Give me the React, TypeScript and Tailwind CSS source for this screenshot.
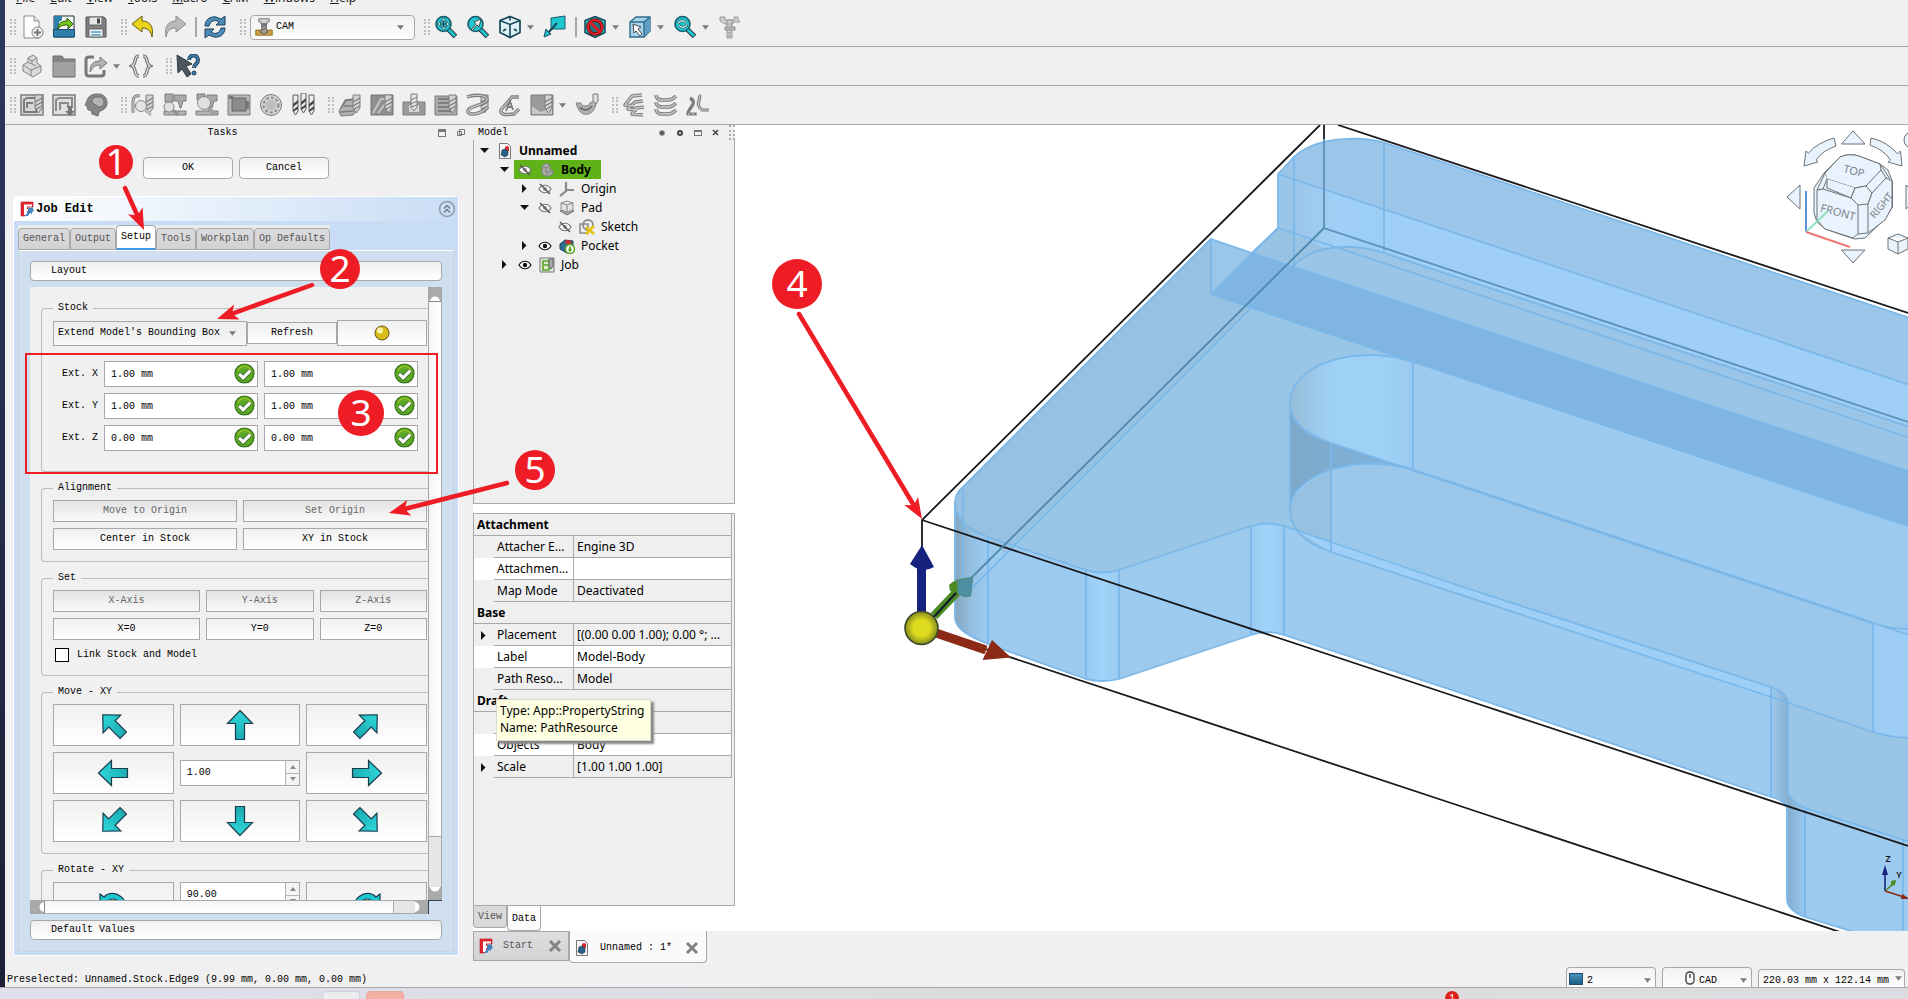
import { Fragment, type ReactNode } from "react";

const mono = "font-['Liberation_Mono',monospace] text-[10px] leading-3";
const sans = "font-['Noto_Sans',sans-serif] text-xs leading-4";

const DARK = "#22313a";
const TEAL = "#1fc8d0";
const GREY = "#7c7c7c";
const LIGHT = "#b9b9b9";

/* ---------- toolbar icons ---------- */

const magnifier = (
    <>
        <path d="M13.500 13.500 21.500 21.500" stroke={DARK} strokeWidth="5" />
        <path d="M13.500 13.500 21 21" stroke={TEAL} strokeWidth="3" />
        <circle cx="9.500" cy="9" r="7.500" fill={TEAL} stroke="#1d5a6c" strokeWidth="1.600" />
    </>
);

const drill = (
    <>
        <path d="M15 2h7v13l-3.500 5-3.500-5z" fill="#d4d4d4" stroke={GREY} />
        <path d="m15 9 7-4M15 13l7-4M15.500 16.500 22 13" stroke={GREY} strokeWidth="1.300" />
    </>
);

const icons: Record<string, ReactNode> = {
    new: (
        <>
            <path d="M4 1h10l5 5v17H4z" fill="#fff" stroke="#8b8b8b" />
            <path d="M14 1v5h5" fill="#e4e4e4" stroke="#8b8b8b" />
            <circle cx="17.500" cy="17.500" r="5.500" fill="#f2f2f2" stroke="#777" />
            <path d="M17.500 14v7M14 17.500h7" stroke="#777" strokeWidth="2" />
        </>
    ),
    open: (
        <>
            <path d="M2 1h20v21H2z" fill="#f7f7f7" stroke={DARK} />
            <path d="M2 1h8v4l-3 2v7H2z" fill="#2f80ab" />
            <path d="M1.500 14.500h21V22h-21z" fill="#2f80ab" stroke="#194f6c" />
            <path d="M6 14c0-6 4-8 9-8V3l6 6-5 5v-4c-4 0-7 0-10 4z" fill="#73c51b" stroke="#2b5a0d" />
        </>
    ),
    save: (
        <>
            <path d="M2 2h18l2 2v18H2z" fill="#7d7f80" stroke="#555" />
            <path d="M5 2h13v8H5z" fill="#e8e8e8" stroke="#666" />
            <path d="M13 3.500h3v5h-3z" fill="#444" />
            <path d="M5 14h14v8H5z" fill="#f4f4f4" stroke="#666" />
            <path d="M7 17h10M7 20h10" stroke="#4f9fc6" strokeWidth="1.500" />
        </>
    ),
    undo: <path d="M1 9 11 1v5c8 0 12 6 10 16-1-6-4-9-10-9v4z" fill="#ecd41b" stroke="#655b10" />,
    redo: <path d="M23 9 13 1v5C5 6 1 12 3 22c1-6 4-9 10-9v4z" fill={LIGHT} stroke="#8c8c8c" />,
    refresh: (
        <>
            <path d="M2 11C2 5 7 1 13 2l5 2 4-3v9h-9l3-3c-4-3-9-1-10 4z" fill="#4d8cb8" stroke="#1c3f5a" />
            <path d="M22 13c0 6-5 10-11 9l-5-2-4 3v-9h9l-3 3c4 3 9 1 10-4z" fill="#4d8cb8" stroke="#1c3f5a" />
        </>
    ),
    cam: (
        <>
            <path d="M1 16h22v7H1z" fill="#c9a04b" stroke="#805c11" />
            <path d="M5 1h14v4h-3v3H8V5H5z" fill="#d0d0d0" stroke="#555" />
            <path d="M9 8h6v7l2 4-5 2-5-2 2-4z" fill="#a0a0a0" stroke="#444" />
            <path d="m9 12 6-3M9 16l6-3" stroke="#444" />
        </>
    ),
    fit: (
        <>
            {magnifier}
            <path d="M9.500 3v12M3.500 9h12" stroke={DARK} strokeWidth="1" />
            <path d="m9.500 3 2.500 3h-5zM9.500 15 7 12h5zM3.500 9l3-2.500v5zM15.500 9l-3-2.500v5z" fill="#b9ecf0" stroke={DARK} strokeWidth=".6" />
        </>
    ),
    fitSelection: (
        <>
            {magnifier}
            <path d="m5 15 5-6-2-2 7-3-2 8-2-2-5 6z" fill="#f4f4f4" stroke={DARK} strokeWidth=".8" />
        </>
    ),
    cube: (
        <>
            <path d="m12 1.500 10 4v12l-10 5-10-5v-12z" fill="#dff1f5" stroke="#17485a" strokeWidth="1.700" />
            <path d="m2 5.500 10 4 10-4M12 9.500v13M12 1.500v4M5 16l3-2M19 16l-3-2" stroke="#17485a" strokeWidth="1.600" />
        </>
    ),
    align: (
        <>
            <path d="m8 3 14-2v13H8z" fill={TEAL} stroke="#1d5a6c" />
            <path d="M14 8 5 18" stroke="#17485a" strokeWidth="2" />
            <path d="m1 22 2-8 2 3 3 2z" fill={TEAL} stroke="#17485a" />
        </>
    ),
    noSign: (
        <>
            <path d="m12 1.500 10 4v12l-10 5-10-5v-12z" fill={TEAL} stroke="#17485a" strokeWidth="1.500" />
            <circle cx="12" cy="12" r="7" fill="#2b6f7a" stroke="#5c0c10" strokeWidth="3.600" />
            <circle cx="12" cy="12" r="7" stroke="#e01b24" strokeWidth="2.200" />
            <path d="m7 7 10 10" stroke="#e01b24" strokeWidth="2.600" />
        </>
    ),
    boxSelect: (
        <>
            <path d="M2 7 8 2h14v14l-6 6H2z" fill="#a9d3ea" stroke="#2f6c8c" strokeWidth="1.400" />
            <path d="M16 7l6-5v14l-6 6z" fill="#5f9fc4" />
            <path d="M2 7h14v15M16 7l6-5" stroke="#2f6c8c" strokeWidth="1.400" />
            <path d="m5 9 8 3-3 2 4 5-2 2-4-5-2 2z" fill="#fff" stroke="#444" />
        </>
    ),
    zoomSync: (
        <>
            {magnifier}
            <path d="M5 8.500c2-4 6-3 8-1M14 9.500c-2 4-6 3-8 1" stroke={DARK} strokeWidth="2.600" />
            <path d="M5 8.500c2-4 6-3 8-1M14 9.500c-2 4-6 3-8 1" stroke="#c4eef0" strokeWidth="1.400" />
        </>
    ),
    caliper: (
        <>
            <path d="M9 5h5v18H9zM2 2h5v3h9V2h4v2l2 3h-7v2H7L2 6z" fill="#cfcfcf" stroke="#999" />
            <path d="M7 12h10v3H7zM10 18h3M10 21h3" fill="#bbb" stroke="#8d8d8d" />
        </>
    ),
    part: (
        <>
            <path d="m3 11 5-3V4l5-3 4 3v5l4 3v6l-8 5-10-6z" fill="#dadada" stroke="#858585" />
            <path d="m3 11 8 5 10-4M8 4l4 3 5-3M12 7v3l4 2M8 8l4 2M11 16v6" stroke="#858585" />
        </>
    ),
    folder: (
        <>
            <path d="M1 2h9l2 3h11v18H1z" fill="#858585" stroke="#6f6f6f" />
            <path d="M1.500 8h21v14h-21z" fill="#a2a2a2" />
        </>
    ),
    link: (
        <>
            <path d="M10 3H5C3 3 2 4 2 6v13c0 2 1 3 3 3h12c2 0 3-1 3-3v-3" stroke="#777" strokeWidth="3" />
            <path d="M6 18c0-8 4-11 10-11V3l7 6-7 6v-4c-5 0-7 2-10 7z" fill="#b4b4b4" stroke="#777" />
        </>
    ),
    braces: (
        <>
            <path d="M10 2C4 2 8 10 3 12c5 2 1 10 7 10M14 2c6 0 2 8 7 10-5 2-1 10-7 10" stroke="#777" strokeWidth="3.500" />
            <path d="M10 2C4 2 8 10 3 12c5 2 1 10 7 10M14 2c6 0 2 8 7 10-5 2-1 10-7 10" stroke="#e3e3e3" strokeWidth="1.200" />
        </>
    ),
    whatsThis: (
        <>
            <path d="m1 1 15 9-6 2 5 8-4 3-5-8-4 4z" fill="#4b565e" stroke="#303a40" />
            <path d="M13 6c0-6 9-6 9 0 0 4-4 4-4 8" stroke="#1f3f5a" strokeWidth="4" />
            <path d="M13 6c0-6 9-6 9 0 0 4-4 4-4 8" stroke="#3f80ab" strokeWidth="2" />
            <circle cx="18" cy="19" r="2" fill="#3f80ab" stroke="#1f3f5a" />
        </>
    ),
    job: (
        <>
            <path d="M1 2h22v20H1z" fill="#d9d9d9" stroke={GREY} strokeWidth="1.500" />
            <path d="M4 18V7l3-2h9v14H4zM7 15v-5h6" stroke={GREY} strokeWidth="2" />
            {drill}
        </>
    ),
    post: (
        <>
            <path d="M1 2h22v20H1z" fill="#e0e0e0" stroke={GREY} strokeWidth="1.500" />
            <path d="M4 18V7l3-2h13v10M8 17v-7h8v5" stroke="#8a8a8a" strokeWidth="2" />
            <path d="M16 13h4v5h3l-5 5-5-5h3z" fill="#777" />
        </>
    ),
    head: (
        <>
            <path d="M8 21c0-3-1-4-4-4l-1-4-2-1 2-4C4 3 8 1 14 1c6 0 9 4 9 9 0 6-5 7-8 9l-1 4z" fill="#858585" stroke="#6c6c6c" />
            <path d="M8 9c0-4 3-5 6-5 4 0 6 2 6 6 0 3-3 4-6 4-1-3-5-2-6-5z" fill="#b5b5b5" stroke="#6c6c6c" />
        </>
    ),
    inspect: (
        <>
            <path d="M2 20V8c0-4 3-6 7-5" stroke={GREY} strokeWidth="3" />
            <path d="M2 20V8c0-4 3-6 7-5" stroke="#ccc" strokeWidth="1.200" />
            {drill}
            <circle cx="10" cy="13" r="5.500" fill="#e4e4e4" stroke="#888" />
            <path d="m14 17 6 5" stroke="#b9b9b9" strokeWidth="3" />
        </>
    ),
    simulate: (
        <>
            <path d="M2 1h8v8H2zM11 2h12v6h-3l-2 7h-1l-2-7h-4z" fill="#a8a8a8" stroke={GREY} />
            <path d="M1 18h22v4H1z" fill="#b3b3b3" stroke={GREY} />
            <circle cx="6" cy="14" r="5" fill="#e0e0e0" stroke="#888" />
            <path d="m10 17 5 5" stroke="#8f8f8f" strokeWidth="3" />
        </>
    ),
    simulateAlt: (
        <>
            <path d="M2 1h8v6H2zM12 2h10v6h-3l-2 7h-3z" fill="#a8a8a8" stroke={GREY} />
            <path d="M1 18h22v4H1z" fill="#b3b3b3" stroke={GREY} />
            <circle cx="9" cy="10" r="6.500" fill="#e0e0e0" stroke="#888" />
            <path d="m13 15 7 6" stroke="#a2a2a2" strokeWidth="4" />
        </>
    ),
    stock: (
        <>
            <path d="M1 2h22v20H1z" fill="#b9b9b9" stroke={GREY} />
            <path d="M5 5h14v13H5z" fill="#8c8c8c" stroke="#666" />
            <path d="M2 3h4v3H2zM18 8h4v8h-4z" fill="#777" />
        </>
    ),
    face: (
        <>
            <circle cx="12" cy="12" r="10.500" fill="#d6d6d6" stroke={GREY} />
            <circle cx="12" cy="12" r="7.500" stroke="#8b8b8b" strokeWidth="2" strokeDasharray="3 2" />
            <circle cx="12" cy="12" r="5.500" fill="#bebebe" />
        </>
    ),
    drills: (
        <>
            {[1, 9, 17].map((x, i) => (
                <g key={x} transform={`translate(${x} ${i === 1 ? 0 : 2})`}>
                    <path d="M1 0h5v16l-2.500 4L1 16z" fill="#ececec" stroke="#5c5c5c" />
                    <path d="m1 9 5-4v3l-5 4zM1 15l5-4v3l-5 3z" fill="#444" />
                </g>
            ))}
        </>
    ),
    profile: (
        <>
            <path d="m1 18 6-11 12-2v12l-4 5-12 1z" fill="#b1b1b1" stroke={GREY} />
            <path d="m3 15 5-8h8M2 19l14-1 4-5M6 13h9" stroke={GREY} strokeWidth="1.500" />
            {drill}
        </>
    ),
    pocket: (
        <>
            <path d="M1 2h22v20H1z" fill="#8f8f8f" stroke="#747474" />
            <path d="m3 20 8-14h4M8 20l7-9 6 7" stroke="#c4c4c4" strokeWidth="2" />
            {drill}
        </>
    ),
    drilling: (
        <>
            <path d="M1 9h22v13H1z" fill="#9a9a9a" stroke={GREY} />
            <path d="M7 12h10v7H7z" fill="#d8d8d8" />
            <path d="M9 1h6v13l-3 4-3-4z" fill="#e5e5e5" stroke={GREY} />
            <path d="m9 7 6-3M9 11l6-3M9 14l6-2" stroke={GREY} />
        </>
    ),
    facing: (
        <>
            <path d="M1 3h22v19H1z" fill="#ababab" stroke={GREY} />
            <path d="M4 6h14M4 10h13M4 14h14M4 18h16" stroke="#707070" strokeWidth="1.600" />
            {drill}
        </>
    ),
    helix: (
        <>
            {drill}
            <path d="M1 4c8-3 21-2 20 3S2 13 2 18s12 4 20-4" stroke={GREY} strokeWidth="3.400" />
            <path d="M1 4c8-3 21-2 20 3S2 13 2 18s12 4 20-4" stroke="#cacaca" strokeWidth="1.200" />
        </>
    ),
    adaptive: (
        <>
            <path d="M21 4h-7L3 17c-1 5 4 5 13 4l5-5" stroke={GREY} strokeWidth="3.400" />
            <path d="M21 4h-7L3 17c-1 5 4 5 13 4l5-5" stroke="#cacaca" strokeWidth="1.200" />
            <path d="m8 18 4-10 3 9M9 14h5" stroke={GREY} strokeWidth="1.800" />
        </>
    ),
    engrave: (
        <>
            <path d="M1 2h22v20H1z" fill="#9b9b9b" stroke={GREY} />
            <path d="m2 13 8 6 12-4v6H2z" fill="#c8c8c8" />
            {drill}
        </>
    ),
    surface: (
        <>
            <path d="M1 10h5c0 4 8 4 9 0l4-2h3l-2 6c-3 9-14 10-17 1z" fill="#b2b2b2" stroke={GREY} />
            <path d="M5 14c3 4 8 4 12-1" stroke="#707070" strokeWidth="2" />
            <path d="M18 1h5v7l-2 3-3-3z" fill="#ddd" stroke={GREY} />
        </>
    ),
    array: (
        <>
            <path d="m20 2-10 1-7 9 9 1M21 8l-8 1-7 7 9 1M22 14l-8 1-4 6 11 1" stroke={GREY} strokeWidth="3.600" strokeLinejoin="round" />
            <path d="m20 2-10 1-7 9 9 1M21 8l-8 1-7 7 9 1M22 14l-8 1-4 6 11 1" stroke="#cacaca" strokeWidth="1.400" strokeLinejoin="round" />
        </>
    ),
    copyOp: (
        <>
            <path d="M2 2c1 6 6 5 10 5s6 0 10-4M2 9c1 6 6 5 10 5s6 0 10-4M2 16c1 6 6 5 10 5s6 0 10-4" stroke={GREY} strokeWidth="3.600" />
            <path d="M2 2c1 6 6 5 10 5s6 0 10-4M2 9c1 6 6 5 10 5s6 0 10-4M2 16c1 6 6 5 10 5s6 0 10-4" stroke="#cacaca" strokeWidth="1.400" />
        </>
    ),
    simpleCopy: (
        <>
            <path d="M4 5c9 5-3 11-2 16h9M13 2c3 4-5 9 3 15h7" stroke={GREY} strokeWidth="3.200" />
            <path d="M13 2c3 4-5 9 3 15h7" stroke="#cacaca" strokeWidth="1.200" />
            <path d="M2 21h9" stroke="#d8d8d8" strokeWidth="1.200" strokeDasharray="2 2" />
        </>
    ),
};

function Icon({ name, className = "size-6" }: { name: string; className?: string }) {
    return (
        <svg viewBox="0 0 24 24" fill="none" className={`${className} shrink-0`} aria-hidden="true">
            {icons[name]}
        </svg>
    );
}

function Caret({ className = "" }: { className?: string }) {
    return (
        <svg viewBox="0 0 8 5" className={`h-[5px] w-[7px] shrink-0 ${className}`} aria-hidden="true">
            <path d="M0 0h8L4 5z" fill="#7d7d7d" />
        </svg>
    );
}

function Logo({ className }: { className: string }) {
    return (
        <svg viewBox="0 0 14 16" className={className} aria-hidden="true">
            <path d="M1 1h12v5H8v5H5v4H1z" fill="#e2262d" stroke="#b5171d" strokeWidth=".6" />
            <path d="M4 3.500h8v2H7v2.500h3v2H7V14H4z" fill="#fff" />
            <path d="m8 8 2-2 1 1 2-1v2l1 2-2 1v2l-2-1-2 3H5l3-4z" fill="#3f84c0" />
        </svg>
    );
}

function DocIcon() {
    return (
        <svg viewBox="0 0 12 16" className="h-4 w-3 shrink-0" aria-hidden="true">
            <path d="M.5.500h8l3 3v12H.5z" fill="#f7f7f7" stroke="#777" />
            <path d="M6 4c0-1 4-1 4 0v4H6z" fill="#d8272c" />
            <path d="m3 7 3-1 3 2v4l-3 2-4-2z" fill="#2b5f86" stroke="#1c3347" strokeWidth=".6" />
        </svg>
    );
}

/* ---------- toolbars ---------- */

const menus = ["File", "Edit", "View", "Tools", "Macro", "CAM", "Windows", "Help"];

// "|" is a drag handle, "-" a separator, a trailing "v" gives the button a drop-down arrow
const mainBarLeft = ["|", "new", "open", "save", "|", "undo", "redo", "-", "refresh", "|"];
const mainBarRight = ["|", "fit", "fitSelection", "cube v", "align", "-", "noSign v", "boxSelect v", "zoomSync v", "caliper"];
const structureBar = ["|", "part", "folder", "link v", "braces", "|", "whatsThis"];
const camBar = [
    "|", "job", "post", "head",
    "|", "inspect", "simulate", "simulateAlt", "stock", "face", "drills",
    "|", "profile", "pocket", "drilling", "facing", "helix", "adaptive", "engrave v", "surface",
    "|", "array", "copyOp", "simpleCopy",
];

function ToolItems({ items }: { items: string[] }) {
    return (
        <>
            {items.map((item, i) => {
                if (item === "|") {
                    return (
                        <span key={i} className="flex w-[15px] shrink-0 gap-0.5 pl-[5px]">
                            <span className="h-4 border-l-2 border-dotted border-[#bdbdbd]" />
                            <span className="h-4 border-l-2 border-dotted border-[#bdbdbd]" />
                        </span>
                    );
                }
                if (item === "-") return <span key={i} className="h-5 w-2 shrink-0 border-l-2 border-[#a8a8a8]" />;
                const [name, drop] = item.split(" ");
                return (
                    <Fragment key={i}>
                        <button type="button" aria-label={name} className={drop ? "flex" : "mr-2 flex"}>
                            <Icon name={name} />
                        </button>
                        {drop && (
                            <button type="button" aria-label={`${name} options`} className="flex w-[21px] pl-[5px]">
                                <Caret />
                            </button>
                        )}
                    </Fragment>
                );
            })}
        </>
    );
}

function Toolbars() {
    return (
        <header>
            <nav className={`${sans} flex h-1.5 items-end gap-[15px] overflow-hidden pl-[11px] text-[#222]`}>
                {menus.map((m) => (
                    <a key={m} href="#menu">
                        <u>{m[0]}</u>
                        {m.slice(1)}
                    </a>
                ))}
            </nav>
            <div className="flex h-[41px] items-center border-b border-[#a8a8a8] pt-0.5">
                <ToolItems items={mainBarLeft} />
                <label className="relative mr-1 flex h-[25px] w-[165px] items-center rounded-sm border border-[#a8a8a8] bg-linear-to-b from-[#f2f2f2] to-[#fdfdfd]">
                    <Icon name="cam" className="absolute left-1 size-[18px]" />
                    <select aria-label="Workbench" className={`${mono} h-full w-full appearance-none pl-[25px]`}>
                        <option>CAM</option>
                    </select>
                    <Caret className="absolute right-2.5" />
                </label>
                <ToolItems items={mainBarRight} />
            </div>
            <div className="flex h-[39px] items-center border-b border-[#a8a8a8]">
                <ToolItems items={structureBar} />
            </div>
            <div className="flex h-[39px] items-center border-b border-[#a8a8a8]">
                <ToolItems items={camBar} />
            </div>
        </header>
    );
}

/* ---------- tasks panel ---------- */

function PushButton({ children, className = "", disabled = false }: { children: ReactNode; className?: string; disabled?: boolean }) {
    return (
        <button
            type="button"
            disabled={disabled}
            className={`flex items-center justify-center border border-[#a8a8a8] bg-linear-to-b ${disabled ? "from-[#e2e2e2] to-[#fafafa] text-[#666]" : "from-[#f0f0f0] to-white"} ${className}`}
        >
            {children}
        </button>
    );
}

function Group({ title, className, children }: { title: string; className: string; children: ReactNode }) {
    return (
        <fieldset className={`mb-2.5 ml-[11px] rounded-l-sm border border-r-0 border-[#bcbcbc] pt-1.5 pl-[11px] ${className}`}>
            <legend className="px-[5px]">{title}</legend>
            {children}
        </fieldset>
    );
}

function CheckMark() {
    return (
        <svg viewBox="0 0 22 22" className="absolute top-0.5 right-[3px] size-[21px]" aria-hidden="true">
            <circle cx="11" cy="11" r="10" fill="#5aa823" stroke="#35701a" strokeWidth="1.200" />
            <path d="M4 8c3-6 11-6 14 0" stroke="#b8d32e" strokeWidth="2" strokeDasharray="1 1" fill="none" />
            <path d="m5.500 11.500 4 4 7.500-7.500" stroke="#4a6b3a" strokeWidth="5" fill="none" />
            <path d="m5.500 11.500 4 4 7.500-7.500" stroke="#fff" strokeWidth="3.200" fill="none" />
        </svg>
    );
}

function LengthInput({ label, value }: { label: string; value: string }) {
    return (
        <span className="relative">
            <input aria-label={label} defaultValue={value} className="h-[26px] w-full border border-[#a8a8a8] bg-white pl-1.5" />
            <CheckMark />
        </span>
    );
}

function SpinBox({ label, value }: { label: string; value: string }) {
    return (
        <span className="flex h-[26px] border border-[#a8a8a8] bg-white">
            <input aria-label={label} defaultValue={value} className="w-full min-w-0 flex-1 pl-1.5" />
            <span className="flex w-3.5 flex-col border-l border-[#b5b5b5] bg-[#f4f4f4]">
                <button type="button" aria-label={`${label} up`} className="flex flex-1 items-center justify-center border-b border-[#b5b5b5]">
                    <svg viewBox="0 0 6 4" className="h-1 w-1.5"><path d="M3 0l3 4H0z" fill="#8a8a8a" /></svg>
                </button>
                <button type="button" aria-label={`${label} down`} className="flex flex-1 items-center justify-center">
                    <svg viewBox="0 0 6 4" className="h-1 w-1.5"><path d="M0 0h6L3 4z" fill="#8a8a8a" /></svg>
                </button>
            </span>
        </span>
    );
}

function MoveArrow({ angle }: { angle: number }) {
    return (
        <svg viewBox="0 0 32 32" className="size-8" aria-hidden="true">
            <path
                d="M16 1.500 28.500 14.500H20.500V30.500H11.500V14.500H3.500z"
                transform={`rotate(${angle} 16 16)`}
                fill="url(#arrowFill)"
                stroke="#1c3a4c"
                strokeWidth="1.200"
            />
        </svg>
    );
}

function RotateArrow({ flip = false }: { flip?: boolean }) {
    return (
        <svg viewBox="0 0 32 32" className={`size-8 ${flip ? "-scale-x-100" : ""}`} aria-hidden="true">
            <path d="M3 7l4 3c6-6 15-4 20 3 3 5 2 11-2 14l-3-3c5-7-4-16-11-10l3 4H3z" fill={TEAL} stroke="#1c3a4c" strokeWidth="1.200" />
        </svg>
    );
}

const moves = [-45, 0, 45, -90, null, 90, -135, 180, 135];
const jobTabs = ["General", "Output", "Setup", "Tools", "Workplan", "Op Defaults"];

function SetupPage() {
    return (
        <div className="min-h-0 overflow-hidden bg-[#f0f0f0] pt-[15px]">
            <Group title="Stock" className="pb-5">
                <div className="flex items-center pr-px">
                    <label className="relative flex h-[25px] flex-1 items-center border border-[#a8a8a8] bg-linear-to-b from-[#ececec] to-[#f8f8f8]">
                        <select aria-label="Stock type" className="h-full w-full appearance-none pl-1">
                            <option>Extend Model's Bounding Box</option>
                        </select>
                        <Caret className="absolute right-2.5" />
                    </label>
                    <PushButton className="h-[22px] w-[90px]">Refresh</PushButton>
                    <PushButton className="h-[26px] w-[90px]">
                        <svg viewBox="0 0 16 16" className="size-4" aria-label="Refresh stock">
                            <circle cx="8" cy="8" r="7" fill="#d9bd1b" stroke="#5c5110" />
                            <circle cx="6" cy="5.500" r="3" fill="#f8f3b0" />
                        </svg>
                    </PushButton>
                </div>
                <div className="mt-[15px] grid grid-cols-[45px_1fr_1fr] items-center gap-1.5 pr-2.5">
                    {[["X", "1.00 mm"], ["Y", "1.00 mm"], ["Z", "0.00 mm"]].map(([axis, value]) => (
                        <Fragment key={axis}>
                            <span className="pl-[9px] whitespace-nowrap">Ext. {axis}</span>
                            <LengthInput label={`Ext. ${axis} negative`} value={value} />
                            <LengthInput label={`Ext. ${axis} positive`} value={value} />
                        </Fragment>
                    ))}
                </div>
            </Group>

            <Group title="Alignment" className="pb-[11px]">
                <div className="grid auto-rows-[22px] grid-cols-2 gap-1.5 pr-px">
                    <PushButton disabled>Move to Origin</PushButton>
                    <PushButton disabled>Set Origin</PushButton>
                    <PushButton>Center in Stock</PushButton>
                    <PushButton>XY in Stock</PushButton>
                </div>
            </Group>

            <Group title="Set" className="pb-[13px]">
                <div className="grid auto-rows-[22px] grid-cols-[147px_1fr_1fr] gap-1.5 pr-px">
                    <PushButton disabled>X-Axis</PushButton>
                    <PushButton disabled>Y-Axis</PushButton>
                    <PushButton disabled>Z-Axis</PushButton>
                    <PushButton>X=0</PushButton>
                    <PushButton>Y=0</PushButton>
                    <PushButton>Z=0</PushButton>
                </div>
                <label className="mt-2 flex items-center gap-2 pl-0.5">
                    <input type="checkbox" className="size-3.5 appearance-none border border-black bg-white" />
                    Link Stock and Model
                </label>
            </Group>

            <Group title="Move - XY" className="pb-[11px]">
                <div className="grid auto-rows-[42px] grid-cols-3 gap-1.5 pr-px">
                    {moves.map((angle, i) =>
                        angle === null ? (
                            <div key={i} className="self-center">
                                <SpinBox label="Move distance" value="1.00" />
                            </div>
                        ) : (
                            <PushButton key={i}>
                                <MoveArrow angle={angle} />
                            </PushButton>
                        )
                    )}
                </div>
            </Group>

            <Group title="Rotate - XY" className="pb-[11px]">
                <div className="grid auto-rows-[42px] grid-cols-3 gap-1.5 pr-px">
                    <PushButton><RotateArrow /></PushButton>
                    <SpinBox label="Rotate angle" value="90.00" />
                    <PushButton><RotateArrow flip /></PushButton>
                </div>
            </Group>
        </div>
    );
}

function TasksPanel() {
    return (
        <aside className={`${mono} flex w-[468px] shrink-0 flex-col`}>
            <div className="flex h-[15px] items-center gap-2.5 pr-2">
                <span className="flex-1 pl-3 text-center">Tasks</span>
                <button type="button" aria-label="Minimise" className="size-2 border border-t-[3px] border-[#777]" />
                <button type="button" aria-label="Float" className="flex">
                    <svg viewBox="0 0 9 9" className="size-[9px]" fill="none" stroke="#777"><path d="M3.500 1.500h5v5h-5zM1.500 3.500h4v4h-4z" /></svg>
                </button>
            </div>
            <div className="mt-[17px] flex justify-center gap-1.5 pr-1.5">
                <PushButton className="h-[22px] w-[90px] rounded-sm">OK</PushButton>
                <PushButton className="h-[22px] w-[90px] rounded-sm">Cancel</PushButton>
            </div>

            <section className="mt-[17px] mr-3.5 mb-[7px] ml-2 flex min-h-0 flex-1 flex-col rounded-t border border-white bg-[#c8ddf5]">
                <h2 className="flex h-6 shrink-0 items-center gap-0.5 bg-linear-to-r from-white to-[#c8ddf5] pr-0.5 pl-1.5 text-xs font-bold">
                    <Logo className="h-4 w-3.5" />
                    <span className="flex-1">Job Edit</span>
                    <button type="button" aria-label="Collapse" className="flex">
                        <svg viewBox="0 0 18 18" className="size-[18px]" fill="none" stroke="#8f9aa6" strokeWidth="1.500">
                            <circle cx="9" cy="9" r="7.500" />
                            <path d="m6 8.500 3-3 3 3M6 12.500l3-3 3 3" stroke="#6f7a86" />
                        </svg>
                    </button>
                </h2>
                <div className="flex min-h-0 flex-1 flex-col px-1 pt-1 pb-[3px]">
                    <div className="flex h-[25px] w-fit shrink-0 items-end bg-[#ebebee]">
                        {jobTabs.map((tab) => (
                            <button
                                key={tab}
                                type="button"
                                className={
                                    tab === "Setup"
                                        ? "h-[25px] rounded-t-sm border border-b-2 border-[#a8a8a8] border-b-[#3d9be9] bg-white px-1 whitespace-nowrap"
                                        : "h-[22px] rounded-t-sm border border-[#a8a8a8] bg-linear-to-b from-[#dcdcde] to-[#d2d2d4] px-1 whitespace-nowrap text-[#555]"
                                }
                            >
                                {tab}
                            </button>
                        ))}
                    </div>
                    <div className="flex min-h-0 flex-1 flex-col border border-[#cdd3da] border-t-white bg-[#d0dff0] px-[11px] pt-2.5 pb-[11px]">
                        <PushButton className="h-5 shrink-0 rounded-sm">
                            <span className="flex-1 pl-5 text-left">Layout</span>
                        </PushButton>
                        <div className="my-1.5 grid min-h-0 flex-1 grid-cols-[minmax(0,1fr)_14px] grid-rows-[minmax(0,1fr)_14px]">
                            <SetupPage />
                            <div className="flex flex-col border border-[#a8a8a8] bg-[#e6e6e8]">
                                <button type="button" aria-label="Scroll up" className="flex h-3.5 shrink-0 items-end justify-center border-b border-[#888] bg-[#aaa]">
                                    <svg viewBox="0 0 10 5" className="h-[5px] w-2.5"><path d="M0 5c1-6 9-6 10 0z" fill="#fff" /></svg>
                                </button>
                                <div className="flex-[535_0_0] border-b border-[#a8a8a8] bg-linear-to-r from-[#f4f4f4] to-white" />
                                <div className="flex-[50_0_0]" />
                                <button type="button" aria-label="Scroll down" className="flex h-3 shrink-0 items-start justify-center bg-[#aaa]">
                                    <svg viewBox="0 0 10 5" className="h-[5px] w-2.5"><path d="M0 0c1 6 9 6 10 0z" fill="#fff" /></svg>
                                </button>
                            </div>
                            <div className="flex border border-[#a8a8a8] bg-[#e6e6e8]">
                                <button type="button" aria-label="Scroll left" className="flex w-3.5 shrink-0 items-center justify-end border-r border-[#888] bg-[#aaa]">
                                    <svg viewBox="0 0 5 10" className="h-2.5 w-[5px]"><path d="M5 0c-6 1-6 9 0 10z" fill="#fff" /></svg>
                                </button>
                                <div className="flex-[348_0_0] border-r border-[#a8a8a8] bg-linear-to-b from-[#f4f4f4] to-white" />
                                <div className="flex-[21_0_0]" />
                                <button type="button" aria-label="Scroll right" className="flex w-3 shrink-0 items-center justify-start bg-[#aaa]">
                                    <svg viewBox="0 0 5 10" className="h-2.5 w-[5px]"><path d="M0 0c6 1 6 9 0 10z" fill="#fff" /></svg>
                                </button>
                            </div>
                            <div className="border-t border-l border-[#33415c]" />
                        </div>
                        <PushButton className="h-5 shrink-0 rounded-sm">
                            <span className="flex-1 pl-5 text-left">Default Values</span>
                        </PushButton>
                    </div>
                </div>
            </section>
        </aside>
    );
}

/* ---------- model panel ---------- */

function Eye({ hidden }: { hidden: boolean }) {
    return (
        <svg viewBox="0 0 14 12" className="h-3 w-3.5" fill="none" aria-hidden="true">
            <path d="M1 6c3-5 9-5 12 0-3 5-9 5-12 0z" fill="#fff" stroke={hidden ? "#777" : "#111"} strokeWidth="1.200" />
            <circle cx="7" cy="6" r="2.200" fill={hidden ? "#aaa" : "#111"} />
            {hidden && <path d="m2 1 10 10" stroke="#555" strokeWidth="1.400" />}
        </svg>
    );
}

const treeIcons: Record<string, ReactNode> = {
    body: (
        <>
            <path d="m3 4 4-3 4 2v4l3 2v3l-6 3-5-3z" fill="#a9ada8" stroke="#7b8379" />
            <path d="m3 4 4 2 4-3M7 6v4l7-1M8 10v5" stroke="#7b8379" fill="none" />
        </>
    ),
    origin: <path d="M7 1v9L1 15M7 9h8" stroke="#8a8a8a" strokeWidth="2.200" fill="none" />,
    pad: (
        <>
            <path d="M1 11l7-3 7 3-7 4z" fill="#a5a5a5" stroke="#777" />
            <path d="m2 3 6-2 6 2v7l-6 2-6-2z" fill="#e2e2e2" stroke="#8a8a8a" />
            <path d="m2 3 6 2 6-2M8 5v7" stroke="#8a8a8a" fill="none" />
        </>
    ),
    sketch: (
        <>
            <circle cx="9" cy="6" r="5" fill="none" stroke="#8c8c8c" strokeWidth="1.800" />
            <path d="M1 5h8v9H1z" fill="none" stroke="#8c8c8c" strokeWidth="1.600" />
            <path d="m7 8 8 7M15 7l-8 8" stroke="#e8c211" strokeWidth="2.600" />
        </>
    ),
    pocket: (
        <>
            <path d="m1 6 5-4 8 1v9l-6 3-7-4z" fill="#2f6f96" stroke="#1c3f55" />
            <path d="m5 4 4-2 4 2-3 3z" fill="#d8272c" />
            <circle cx="11" cy="11" r="4.500" fill="#fff" stroke="#57a51b" strokeWidth="1.500" />
            <path d="M11 8v5M9.500 11l1.500 2 1.500-2" stroke="#57a51b" fill="none" strokeWidth="1.400" />
        </>
    ),
    job: (
        <>
            <path d="M1 1h14v14H1z" fill="#dfe7da" stroke="#777" />
            <path d="M4 13V4h6v9H4zM5 8h4" stroke="#57a51b" strokeWidth="1.600" fill="none" />
            <path d="M10 2h4v7l-2 3-2-3z" fill="#aaa" stroke="#666" />
        </>
    ),
};

type TreeRow = { label: string; icon: string; indent: string; open?: boolean; hidden?: boolean };

const tree: TreeRow[] = [
    { label: "Unnamed", icon: "doc", indent: "pl-0", open: true },
    { label: "Body", icon: "body", indent: "pl-5", open: true, hidden: true },
    { label: "Origin", icon: "origin", indent: "pl-10", open: false, hidden: true },
    { label: "Pad", icon: "pad", indent: "pl-10", open: true, hidden: true },
    { label: "Sketch", icon: "sketch", indent: "pl-15", hidden: true },
    { label: "Pocket", icon: "pocket", indent: "pl-10", open: false, hidden: false },
    { label: "Job", icon: "job", indent: "pl-5", open: false, hidden: false },
];

function Disclosure({ open }: { open: boolean }) {
    return (
        <svg viewBox="0 0 9 9" className="size-[9px]" aria-hidden="true">
            <path d={open ? "M0 2h9L4.500 7z" : "M2 0v9L6.500 4.500z"} fill="#111" />
        </svg>
    );
}

function ModelTree() {
    return (
        <ul className={`${sans} h-[364px] shrink-0 border border-t-0 border-[#a8a8a8] bg-[#efefef] pt-px`}>
            {tree.map((row) => (
                <li key={row.label} className={`flex h-[19px] items-center ${row.indent}`}>
                    <span className="flex w-5 justify-center">{row.open !== undefined && <Disclosure open={row.open} />}</span>
                    <span className={`flex h-full items-center ${row.label === "Body" ? "bg-[#60b219] pr-2.5" : ""}`}>
                        {row.hidden !== undefined && (
                            <span className="flex w-[22px] justify-center">
                                <Eye hidden={row.hidden} />
                            </span>
                        )}
                        <span className="mr-[3px] flex w-[22px] justify-center">
                            {row.icon === "doc" ? <DocIcon /> : <svg viewBox="0 0 16 16" className="size-4">{treeIcons[row.icon]}</svg>}
                        </span>
                        <span className={row.label === "Body" || row.label === "Unnamed" ? "font-bold" : ""}>{row.label}</span>
                    </span>
                </li>
            ))}
        </ul>
    );
}

type Prop = { group?: string; name?: string; value?: string; white?: boolean; expand?: boolean };

const props: Prop[] = [
    { group: "Attachment" },
    { name: "Attacher E...", value: "Engine 3D" },
    { name: "Attachmen...", value: "", white: true },
    { name: "Map Mode", value: "Deactivated" },
    { group: "Base" },
    { name: "Placement", value: "[(0.00 0.00 1.00); 0.00 °; ...", expand: true },
    { name: "Label", value: "Model-Body", white: true },
    { name: "Path Reso...", value: "Model" },
    { group: "Draft" },
    { name: "", value: "" },
    { name: "Objects", value: "Body", white: true },
    { name: "Scale", value: "[1.00 1.00 1.00]", expand: true },
];

function PropertyTable() {
    return (
        <div className={`${sans} relative mt-[9px] flex-1 border border-[#a8a8a8] bg-[#efefef] pr-0.5`}>
            <table className="w-full table-fixed border-separate border-spacing-0 border-r border-[#a8a8a8]">
                <colgroup>
                    <col className="w-5" />
                    <col className="w-20" />
                    <col />
                </colgroup>
                <tbody>
                    {props.map((p, i) =>
                        p.group ? (
                            <tr key={i} className="h-[22px]">
                                <th colSpan={3} className="border-b border-[#a8a8a8] p-0 pl-[3px] text-left font-bold">{p.group}</th>
                            </tr>
                        ) : (
                            <tr key={i} className={p.white ? "h-[22px] bg-white" : "h-[22px]"}>
                                <td className="p-0 pl-[5px]">{p.expand && <Disclosure open={false} />}</td>
                                <td className="border-r border-b border-[#a8a8a8] p-0 pl-[3px] whitespace-nowrap">{p.name}</td>
                                <td className="border-b border-[#a8a8a8] p-0 pl-[3px] whitespace-nowrap">{p.value}</td>
                            </tr>
                        )
                    )}
                </tbody>
            </table>
            <div role="tooltip" className="absolute top-[185px] left-[22px] border border-[#d8d8d0] bg-[#ffffe1] pt-0.5 pr-1.5 pb-1 pl-[3px] leading-[17px] whitespace-nowrap shadow-[3px_3px_2px_#888]">
                Type: App::PropertyString
                <br />
                Name: PathResource
            </div>
        </div>
    );
}

function ModelPanel() {
    return (
        <aside className="flex w-[262px] shrink-0 flex-col">
            <div className={`${mono} flex h-[15px] shrink-0 items-center gap-2.5 bg-[#f0f0f0] pl-[5px]`}>
                <span className="flex-1">Model</span>
                <span className="mx-px size-1.5 rounded-full border border-[#999] bg-[#555]" />
                <span className="mx-px size-1.5 rounded-full border-2 border-[#444]" />
                <button type="button" aria-label="Minimise" className="h-1.5 w-2 border border-t-2 border-[#777]" />
                <button type="button" aria-label="Close" className="flex">
                    <svg viewBox="0 0 7 7" className="size-[7px]"><path d="m1 1 5 5M6 1 1 6" stroke="#444" strokeWidth="1.600" /></svg>
                </button>
                <span className="h-full w-1.5 border-x-2 border-dotted border-[#aaa]" />
            </div>
            <ModelTree />
            <PropertyTable />
            <div className={`${mono} flex h-[25px] shrink-0 items-start`}>
                <button type="button" className="h-[22px] w-[34px] rounded-b-sm border border-t-0 border-[#a8a8a8] bg-[#d9d9db] text-[#555]">View</button>
                <button type="button" className="h-[25px] w-[34px] rounded-b-sm border border-t-0 border-[#a8a8a8] bg-[#fbfbfb] pt-0.5">Data</button>
            </div>
        </aside>
    );
}

/* ---------- 3D view ---------- */

const EDGE = "#7ab8ea";

const solid =
    "M955 503C955 497 958 491 963 487L1211 239L1252 253L1278 228V174L1294 157C1308 144 1328 139 1354 138.700Q1370 138.700 1384 142.700L1910 318V950L1851 931L1805 917Q1787 910 1787 899V808Q1786 801 1771 797L1460 692.700L1284 635Q1268 629 1251 635L1119 679Q1103 683 1086 679L988 644C966 635 955 628 955 617Z";

const topFace =
    "M955 503C955 497 958 491 963 487L1211 239V294L1308 327L1413 362Q1395 355 1369 355C1320 356 1290 378 1290 403V510C1290 530 1305 543 1331 552L1771 697L1460 586L1284 526Q1268 521 1251 526L1119 570Q1103 575 1086 570L988 537C968 530 955 518 955 503Z";

function Scene() {
    return (
        <svg viewBox="735 125 1173 806" preserveAspectRatio="xMinYMin slice" className="block h-full w-full" fill="none" aria-label="3D view">
            <defs>
                <linearGradient id="corner"><stop stopColor="#86a5bd" /><stop offset=".5" stopColor="#94c0e2" /><stop offset="1" stopColor="#9dcaef" /></linearGradient>
                <linearGradient id="pocketWall"><stop stopColor="#97bcd8" /><stop offset=".35" stopColor="#9fd1f7" /><stop offset=".75" stopColor="#9fd1f7" /><stop offset="1" stopColor="#9ac9ef" /></linearGradient>
                <linearGradient id="pocketDark"><stop stopColor="#7da9c9" /><stop offset="1" stopColor="#80b5e2" /></linearGradient>
                <linearGradient id="pillar"><stop stopColor="#9acaf1" /><stop offset=".5" stopColor="#a1d4fa" /><stop offset="1" stopColor="#9acaf1" /></linearGradient>
                <linearGradient id="fade"><stop stopColor="#9dcaef" /><stop offset="1" stopColor="#86afd0" /></linearGradient>
                <linearGradient id="fadeBack"><stop stopColor="#82abcd" /><stop offset="1" stopColor="#9bc9ef" /></linearGradient>
                <linearGradient id="farCurve"><stop stopColor="#9bc5e8" /><stop offset=".5" stopColor="#a0d0f8" /><stop offset="1" stopColor="#9ccdf5" /></linearGradient>
                <radialGradient id="ball"><stop offset=".5" stopColor="#dfdb20" /><stop offset="1" stopColor="#858c1c" /></radialGradient>
            </defs>

            {/* translucent body, back to front */}
            <path d={solid} fill="#9dcaef" />
            <path d="M1384 143 1910 318V385L1384 209Z" fill="#9bc6ea" />
            <path d="M1278 174 1910 385V427L1384 253Q1354 243 1325 250L1278 228Z" fill="#9fcef6" />
            <path d="M1294 157C1308 144 1328 139 1354 138.700Q1370 138.700 1384 142.700V209L1294 179Z" fill="#9bc6e9" />
            <path d="M1294 179 1384 209V253Q1354 243 1325 250L1294 235Z" fill="url(#farCurve)" />
            <path d="M1278 174 1294 157V234L1278 228Z" fill="#99c5e9" />
            <path d="M1278 228 1325 248Q1308 253 1294 265L1252 253Z" fill="#98c2e2" />
            <path d="M1294 265Q1308 252 1325 249Q1354 243 1384 253L1910 427V472L1308 272Z" fill="#9ac5e7" />
            <path d={topFace} fill="#99c5e7" />
            <path d="M963 487 1211 239V294L1294 265 1004 553 988 537C968 530 955 518 955 503Q956 492 963 487Z" fill="#97c1e1" />
            <path d="M1211 239 1252 253 1211 294Z" fill="#9ac6e9" />
            <path d="M1211 294 1252 253 1908 471V526L1413 362 1308 327Z" fill="#80b5e2" />

            {/* pocket */}
            <path d="M1290 403C1290 425 1310 438 1331 443L1413 470Q1395 464 1371 463.500C1325 464 1290 485 1290 510Z" fill="url(#pocketDark)" />
            <path d="M1290 403C1290 378 1320 356 1369 355Q1395 355 1413 362V470L1331 443C1305 434 1290 422 1290 403Z" fill="url(#pocketWall)" />
            <path d="M1413 362 1908 526V633L1413 470Z" fill="#9dcaef" />
            <path d="M1290 510C1290 485 1325 464 1371 463.500Q1395 464 1413 470L1873 623V732L1771 697 1331 552C1305 543 1290 530 1290 510Z" fill="#9bc7ea" />
            <path d="M1290 510C1290 500 1300 484 1331 472V552C1305 543 1290 530 1290 510Z" fill="#97c1e1" />
            <path d="M1284 526 1460 586 1771 687 1783 701 1771 697 1331 552 1300 533Z" fill="#9fcef6" />
            <path d="M1873 623Q1890 629 1908 629V738Q1888 737 1873 732Z" fill="#9dcdf4" />
            <path d="M1788 703 1873 732Q1888 737 1910 738V842L1805 808Q1788 800 1788 790Z" fill="#99c5e6" />

            {/* outer corners */}
            <path d="M955 503C955 518 968 530 988 537V644C966 635 955 628 955 617Z" fill="url(#corner)" />
            <path d="M1086 570Q1103 575 1119 570V679Q1103 683 1086 679Z" fill="url(#pillar)" />
            <path d="M1251 526Q1268 521 1284 526V635Q1268 629 1251 635Z" fill="url(#pillar)" />
            <path d="M1771 687Q1788 693 1788 703V808Q1786 801 1771 797Z" fill="url(#fade)" />
            <path d="M1788 790Q1788 800 1805 808V917Q1787 910 1787 899Z" fill="url(#fadeBack)" />

            {/* edges */}
            <g stroke={EDGE} strokeWidth="1.800" strokeLinejoin="round">
                <path d={solid} />
                <path d="M955 503C955 518 968 530 988 537L1086 570Q1103 575 1119 570L1251 526Q1268 521 1284 526L1460 586 1771 687Q1788 693 1788 703V790Q1788 800 1805 808L1910 842" />
                <path d="M1278 174 1910 385M1278 228 1910 438M1294 157V265M1384 143V253" />
                <path d="M963 597 1294 265Q1308 252 1325 249Q1354 243 1384 253L1910 427" />
                <path d="M1211 239V294L1278 228M1252 253 1908 471M1211 294 1308 327 1908 526" />
                <path d="M1413 362Q1395 355 1369 355C1320 356 1290 378 1290 403C1290 422 1305 434 1331 443L1413 470V362" />
                <path d="M1413 470Q1395 464 1371 463.500C1325 464 1290 485 1290 510C1290 530 1305 543 1331 552L1771 697 1873 732Q1888 737 1910 738M1331 443V552" />
                <path d="M1413 470 1873 623" strokeWidth="2.800" />
                <path d="M1873 623Q1890 629 1910 629M1873 623 1910 635M1873 623V732M1290 403V510" />
                <path d="M963 487V597M988 537V644M1086 570V679M1119 570V679M1251 526V635M1284 526V635M1771 687V797M1805 808V917M1903 840V931" />
            </g>

            {/* stock box */}
            <g stroke="#16181c" strokeWidth="1.800">
                <path d="M922 628V520L1320 125M922 520 1460 698 1908 846M922 628 1460 806 1840 932M1338 125 1908 313" />
                <path d="M1324 125V139" />
            </g>
            <path d="M1324 139V228L1908 422" stroke="#5e91b8" strokeWidth="1.800" />
            <path d="M1324 228 957 592" stroke="#4c88ae" strokeWidth="1.800" />

            {/* origin triad */}
            <path d="M934 616 957 592" stroke="#4c8a24" strokeWidth="9" />
            <path d="M949 585Q955 578 973 577L971 596Q965 599 958 594L950 591Z" fill="#4c8a24" />
            <path d="M957 580 973 577 971 596Q965 599 958 594Z" fill="#4c8fa0" />
            <path d="M932 619 956 593" stroke="#10152b" strokeWidth="2" />
            <path d="M936 633 986 650" stroke="#8c2a17" strokeWidth="9" />
            <path d="M992 640 1011 657.500 982.500 660Z" fill="#8c2a17" />
            <path d="M921.500 612V566" stroke="#16237e" strokeWidth="9" />
            <path d="M922 545 934 567Q922 574 910 564Z" fill="#16237e" />
            <circle cx="921.500" cy="628" r="16.500" fill="url(#ball)" stroke="#3c4a2c" strokeWidth="1.600" />

            {/* navigation cube */}
            <g fill="#e8f3fd" stroke="#6d7378" strokeWidth="1">
                <path d="M1853 131 1865 144H1841.500ZM1787 197 1800 185V209ZM1841.500 250H1865L1853 263ZM1906 185V209L1919 197Z" />
                <path d="M1834 138Q1817 143 1808.500 153L1806 151 1804 166 1818 162 1816 160Q1822 151 1836 146Z" />
                <path d="M1871 138Q1888 142 1897.500 154L1900.500 151 1902 166 1888 162 1890.500 160Q1884 150 1870 145Z" />
                <circle cx="1912" cy="140" r="8" />
                <path d="M1840 157Q1849 153 1859 156L1880 164 1888 170 1892.500 182V207L1885 219 1865 238 1854.500 239 1825 229 1817 222 1814 213V188L1824 173Z" />
                <path d="M1840 157Q1849 153 1859 156L1880 164 1881 170 1866 186 1855 188 1827 179 1825 173Z" />
                <path d="M1827 179V188L1851 198 1855 188M1825 173 1817 190 1823 189 1827 179" />
                <path d="M1817 190 1823 189 1851 198 1858 205V234L1853 238 1825 229 1817 220Z" />
                <path d="M1855 188 1866 186 1872 193 1868 204 1858 205 1851 198Z" />
                <path d="M1872 193 1886 178 1892 181V207L1885 220 1868 233V204ZM1858 234 1868 233M1881 170 1886 178M1880 164 1890 179" />
                <path d="M1898 234 1908 238V249L1898 254 1888 249V238ZM1888 238 1898 242 1908 238M1898 242V254" />
            </g>
            <g className="font-['Noto_Sans',sans-serif]" fill="#7d8288" fontSize="10" textAnchor="middle">
                <text x="1854" y="175" transform="rotate(14 1854 171)" fontSize="11">TOP</text>
                <text x="1838" y="216" transform="rotate(15 1838 212)" fontSize="11">FRONT</text>
                <text x="1881" y="209" transform="rotate(-50 1881 205)">RIGHT</text>
            </g>
            <path d="M1806 191V232" stroke="#5a94dc" strokeWidth="2" />
            <path d="M1806 232 1828 211" stroke="#8fe3c0" strokeWidth="2" />
            <path d="M1806 232 1850 247" stroke="#f27777" strokeWidth="2" />

            {/* axis cross */}
            <path d="M1885 891V872" stroke="#16237e" strokeWidth="1.600" />
            <path d="M1885 865 1888 875H1882Z" fill="#16237e" />
            <path d="M1885 891 1893 884" stroke="#4c8a24" strokeWidth="1.600" />
            <path d="M1896 880 1895 885 1891 886 1891 881Z" fill="#4c8a24" />
            <path d="M1885 891 1904 897" stroke="#8c2a17" strokeWidth="1.600" />
            <path d="M1902 894 1910 899 1901 899Z" fill="#8c2a17" />
            <g className="font-['Noto_Sans',sans-serif]" fill="#111" fontSize="9" fontWeight="600" textAnchor="middle">
                <text x="1888" y="862">Z</text>
                <text x="1899" y="878">Y</text>
            </g>
        </svg>
    );
}

/* ---------- numbered callouts ---------- */

const callouts = [
    { n: 1, x: 116, y: 162, r: 17 },
    { n: 2, x: 340, y: 269, r: 20 },
    { n: 3, x: 361, y: 413, r: 23 },
    { n: 4, x: 797, y: 284, r: 25 },
    { n: 5, x: 535, y: 470, r: 20 },
];

// start x, start y, tip x, tip y
const pointers = [
    [125, 188, 144, 230],
    [312, 285, 217, 319],
    [799, 314, 922, 519],
    [507, 483, 389, 513],
];

function Callouts() {
    return (
        <svg className="pointer-events-none absolute inset-0 h-full w-full" aria-hidden="true">
            <rect x="26" y="354" width="411" height="119" fill="none" stroke="#ee1c24" strokeWidth="2" />
            {pointers.map(([x1, y1, x2, y2], i) => {
                const len = Math.hypot(x2 - x1, y2 - y1);
                const angle = (Math.atan2(y2 - y1, x2 - x1) * 180) / Math.PI;
                return (
                    <g key={i} transform={`translate(${x1} ${y1}) rotate(${angle})`} fill="#ee1c24">
                        <path d={`M0 0H${len - 14}`} stroke="#ee1c24" strokeWidth="4.500" strokeLinecap="round" />
                        <path d={`M${len} 0 ${len - 21} -8 ${len - 16} 0 ${len - 21} 8Z`} />
                    </g>
                );
            })}
            {callouts.map((c) => (
                <g key={c.n}>
                    <circle cx={c.x} cy={c.y} r={c.r} fill="#ee1c24" />
                    <text x={c.x} y={c.y + 13} textAnchor="middle" fill="#fff" fontSize="37" className="font-['Noto_Sans',sans-serif]">
                        {c.n}
                    </text>
                </g>
            ))}
        </svg>
    );
}

/* ---------- bottom bars ---------- */

function CloseX() {
    return (
        <svg viewBox="0 0 14 14" className="size-3.5 shrink-0" aria-hidden="true">
            <path d="m2 2 10 10M12 2 2 12" stroke="#838383" strokeWidth="3" />
        </svg>
    );
}

function DocumentTabs() {
    return (
        <div className={`${mono} flex h-8 shrink-0 items-start bg-[#f0f0f0]`}>
            <div className="flex h-[30px] w-24 items-center border border-[#a8a8a8] bg-linear-to-b from-[#dedee0] to-[#d3d3d5] pr-1.5 pl-[5px] text-[#555]">
                <Logo className="mr-2.5 h-4 w-3.5" />
                <a href="#start" className="flex-1">Start</a>
                <button type="button" aria-label="Close Start"><CloseX /></button>
            </div>
            <div className="flex h-8 w-[138px] items-center rounded-b-sm border border-t-0 border-[#a8a8a8] bg-[#fafafa] pt-0.5 pr-[7px] pl-1.5">
                <DocIcon />
                <a href="#doc" className="flex-1 pl-3">Unnamed : 1*</a>
                <button type="button" aria-label="Close Unnamed"><CloseX /></button>
            </div>
        </div>
    );
}

const boxStyle = "relative flex items-center rounded-t-sm border border-b-0 border-[#a8a8a8] bg-linear-to-b from-[#f2f2f2] to-[#fdfdfd]";

function StatusBar() {
    return (
        <footer className={`${mono} flex h-6 shrink-0 items-end gap-1.5 pr-[3px] pl-0.5`}>
            <span className="flex-1 self-center pt-2.5">Preselected: Unnamed.Stock.Edge9 (9.99 mm, 0.00 mm, 0.00 mm)</span>
            <label className={`${boxStyle} h-5 w-[90px]`}>
                <span className="absolute bottom-0.5 left-0.5 h-3 w-3.5 border border-[#1d4a66] bg-linear-to-b from-[#4b94bd] to-[#1f5f86]" />
                <select aria-label="Notifications" className="h-full w-full appearance-none pt-1.5 pl-5"><option>2</option></select>
                <Caret className="absolute right-1 bottom-1" />
            </label>
            <label className={`${boxStyle} h-5 w-[90px]`}>
                <svg viewBox="0 0 10 14" className="absolute bottom-0.5 left-[22px] h-3.5 w-2.5" fill="none" stroke="#444" strokeWidth="1.400">
                    <rect x="1" y="1" width="8" height="12" rx="3.500" />
                    <path d="M5 3v4" />
                </svg>
                <select aria-label="Navigation style" className="h-full w-full appearance-none pt-1.5 pl-9"><option>CAD</option></select>
                <Caret className="absolute right-1 bottom-1" />
            </label>
            <label className={`${boxStyle} h-[18px] w-[147px]`}>
                <select aria-label="View size" className="h-full w-full appearance-none pt-1 pl-1"><option>220.03 mm x 122.14 mm</option></select>
                <Caret className="absolute right-0.5 bottom-1.5" />
            </label>
        </footer>
    );
}

export default function App() {
    return (
        <div className="relative flex h-screen flex-col overflow-hidden bg-[#f0f0f0] text-black">
            <svg className="absolute size-0" aria-hidden="true">
                <linearGradient id="arrowFill" x2="0" y2="1"><stop stopColor="#2fd8dc" /><stop offset="1" stopColor="#1aacb2" /></linearGradient>
            </svg>
            <div className="flex min-h-0 flex-1">
                <div className="w-[5px] shrink-0 bg-linear-to-b from-[#2b3a5e] to-[#1d1f38]" />
                <div className="flex min-w-0 flex-1 flex-col">
                    <Toolbars />
                    <div className="flex min-h-0 flex-1">
                        <TasksPanel />
                        <div className="flex min-w-0 flex-1 flex-col">
                            <div className="flex min-h-0 flex-1 bg-white">
                                <ModelPanel />
                                <main className="min-w-0 flex-1 overflow-hidden"><Scene /></main>
                            </div>
                            <DocumentTabs />
                        </div>
                    </div>
                    <StatusBar />
                </div>
            </div>
            <div className="flex h-3 shrink-0 items-start overflow-hidden border-t border-[#a8a8a8] bg-linear-to-r from-[#dfdfee] via-[#dcdcde] to-[#dcdce2] pt-[3px]">
                <span className="ml-[322px] h-4 w-[38px] rounded-t border border-[#d0d0d8] bg-[#ececf0]" />
                <span className="ml-1.5 h-4 w-[38px] rounded-t border border-[#e7a89c] bg-[#f2b0a2]" />
                <span className="flex-1" />
                <span className="mr-[449px] size-3.5 shrink-0 rounded-full bg-[#e0221f] text-center text-[10px] leading-3.5 text-white">1</span>
            </div>
            <Callouts />
        </div>
    );
}
